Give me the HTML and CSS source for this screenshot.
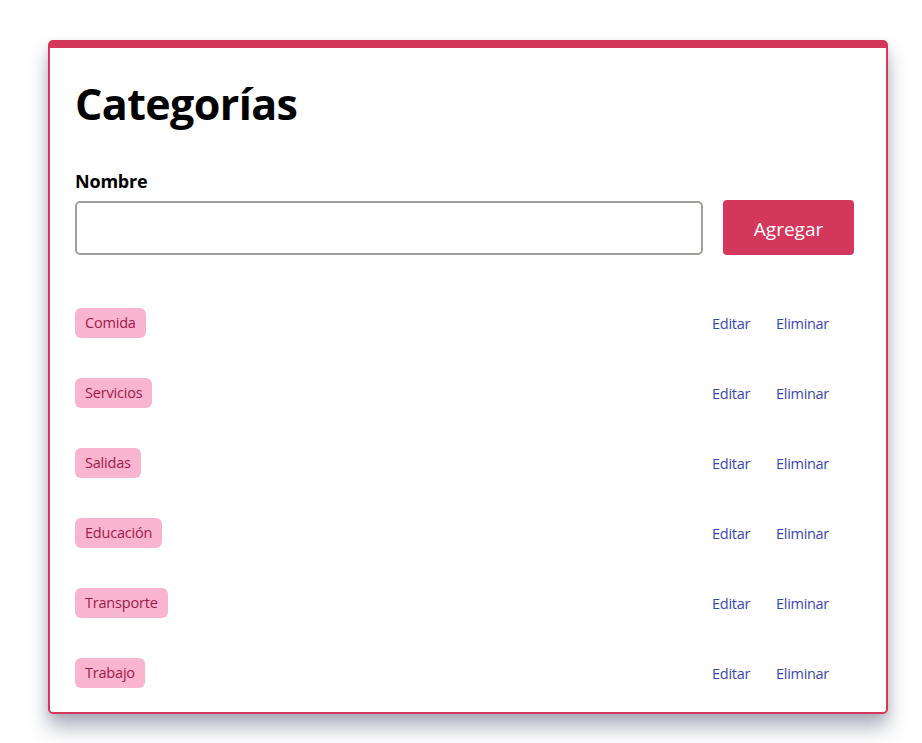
FILE: index.html
```html
<!DOCTYPE html>
<html lang="es">
<head>
<meta charset="utf-8">
<title>Categorías</title>
<link rel="stylesheet" href="styles.css">
</head>
<body>
<div class="card">
  <h1 class="title">Categorías</h1>
  <form class="form">
    <label class="label" for="nombre">Nombre</label>
    <div class="form-row">
      <input class="input" id="nombre" type="text">
      <button class="btn" type="button">Agregar</button>
    </div>
  </form>
  <ul class="list">
    <li class="row"><span class="pill">Comida</span><div class="actions"><a class="link">Editar</a><a class="link">Eliminar</a></div></li>
    <li class="row"><span class="pill">Servicios</span><div class="actions"><a class="link">Editar</a><a class="link">Eliminar</a></div></li>
    <li class="row"><span class="pill">Salidas</span><div class="actions"><a class="link">Editar</a><a class="link">Eliminar</a></div></li>
    <li class="row"><span class="pill">Educación</span><div class="actions"><a class="link">Editar</a><a class="link">Eliminar</a></div></li>
    <li class="row"><span class="pill">Transporte</span><div class="actions"><a class="link">Editar</a><a class="link">Eliminar</a></div></li>
    <li class="row"><span class="pill">Trabajo</span><div class="actions"><a class="link">Editar</a><a class="link">Eliminar</a></div></li>
  </ul>
</div>
</body>
</html>
```
FILE: styles.css
```css
* { box-sizing: border-box; }
html, body { margin: 0; padding: 0; background: #fff; }
body {
  font-family: "Open Sans", "Noto Sans", sans-serif;
  color: #000;
  padding: 40px 34px 40px 48px;
  min-height: 743px;
}
.card {
  width: 840px;
  border: 2px solid #d4375c;
  border-top-width: 8px;
  border-radius: 5px;
  background: #fff;
  padding: 28px 32px 4px 25px;
  box-shadow: 0 14px 20px 0 rgba(60, 70, 100, 0.38), 0 4px 8px 0 rgba(60, 70, 100, 0.15);
}
.title {
  margin: 0;
  font-size: 43px;
  line-height: 56px;
  font-weight: 700;
  letter-spacing: -0.6px;
}
.form { margin-top: 37px; }
.label {
  display: block;
  font-size: 18px;
  font-weight: 700;
  line-height: 24px;
  letter-spacing: -0.2px;
}
.form-row {
  display: flex;
  gap: 20px;
  margin-top: 7px;
  align-items: center;
}
.input {
  flex: 1;
  height: 54px;
  border: 2px solid #a19e9b;
  border-radius: 5px;
  font-size: 18px;
  padding: 0 12px;
  margin-top: 1px;
}
.btn {
  width: 131px;
  height: 55px;
  background: #d4375c;
  color: #fff;
  border: 0;
  border-radius: 4px;
  font-family: inherit;
  font-size: 19px;
  padding-top: 4px;
}
.list {
  list-style: none;
  margin: 33px 0 0 0;
  padding: 0;
}
.row {
  display: flex;
  align-items: center;
  justify-content: space-between;
  height: 70px;
  padding-right: 25px;
}
.pill {
  display: inline-block;
  height: 30px;
  line-height: 30px;
  padding: 0 10px;
  border-radius: 6px;
  background: #f9b5cf;
  color: #a0184a;
  font-size: 14.5px;
  letter-spacing: -0.2px;
}
.actions {
  display: flex;
  gap: 26px;
}
.link {
  color: #3946b4;
  font-size: 14.5px;
  letter-spacing: -0.3px;
  cursor: pointer;
}
```
